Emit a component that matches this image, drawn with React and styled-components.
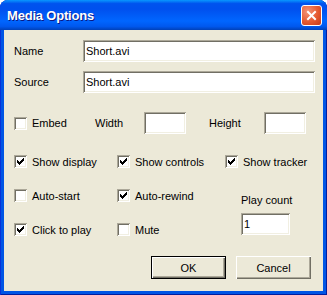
import React from 'react';
import styled, { createGlobalStyle } from 'styled-components';

const Global = createGlobalStyle`
    html, body { margin: 0; padding: 0; background: #fff; }
    body { font-family: "Liberation Sans", Arial, sans-serif; font-size: 11px; color: #000; }
`;

const Window = styled.div`
    width: 327px;
    height: 295px;
    box-sizing: border-box;
    display: flex;
    flex-direction: column;
    background: #0055e5;
    border-radius: 8px 8px 0 0;
    padding: 0 4px 4px 4px;
    box-shadow: inset 1px 0 #0831d9, inset -1px 0 #001ea0, inset 0 -1px #001ea0;
`;

const TitleBar = styled.div`
    height: 30px;
    margin: 0 -4px;
    padding: 0 5px 0 7px;
    display: flex;
    align-items: center;
    justify-content: space-between;
    border-radius: 8px 8px 0 0;
    background: linear-gradient(to bottom, #0997ff 0%, #0053ee 12%, #0050ee 30%, #0066ff 70%, #0058ee 88%, #0041b8 100%);
`;

const Title = styled.span`
    color: #fff;
    font-family: "Liberation Sans", Arial, sans-serif;
    font-weight: bold;
    font-size: 13px;
    letter-spacing: -0.2px;
    text-shadow: 1px 1px #0a1883;
    padding-top: 1px;
`;

const CloseBtn = styled.div`
    width: 21px;
    height: 21px;
    box-sizing: border-box;
    border: 1px solid #fff;
    border-radius: 3px;
    background: radial-gradient(circle at 30% 30%, #f39478 0%, #e55a30 55%, #c4391a 100%);
    display: flex;
    align-items: center;
    justify-content: center;
    margin-top: 1px;
`;

const Body = styled.div`
    flex: 1;
    background: #ece9d8;
    padding: 10px 8px 0 10px;
    display: flex;
    flex-direction: column;
`;

const FieldRow = styled.div`
    display: flex;
    align-items: center;
    height: 22px;
    margin-top: ${p => p.gap || 0}px;
`;

const Label = styled.span`
    width: ${p => p.w ? `${p.w}px` : 'auto'};
    flex-shrink: 0;
    white-space: nowrap;
`;

const TextBox = styled.div`
    box-sizing: border-box;
    height: 22px;
    width: ${p => p.w ? `${p.w}px` : 'auto'};
    flex: ${p => p.w ? '0 0 auto' : '1'};
    background: #fff;
    padding: 4px 3px;
    line-height: 14px;
    box-shadow: inset 1px 1px #aca899, inset -1px -1px #fff, inset 2px 2px #716f64, inset -2px -2px #f1efe2;
`;

const Spacer = styled.div`
    width: ${p => p.w}px;
    flex-shrink: 0;
`;

const Options = styled.div`
    display: grid;
    grid-template-columns: 103px 108px 1fr;
    grid-template-rows: 13px 13px 13px;
    row-gap: 21px;
    margin-top: 21px;
`;

const CheckItem = styled.label`
    display: flex;
    align-items: center;
    gap: 5px;
    height: 13px;
    white-space: nowrap;
`;

const Box = styled.span`
    width: 13px;
    height: 13px;
    flex-shrink: 0;
    background: #fff;
    box-shadow: inset 1px 1px #aca899, inset -1px -1px #fff, inset 2px 2px #716f64, inset -2px -2px #f1efe2;
    display: flex;
    align-items: center;
    justify-content: center;
`;

const PlayCount = styled.div`
    grid-column: 3;
    grid-row: 2 / span 2;
    padding-left: 16px;
    margin-top: 5px;
    display: flex;
    flex-direction: column;
    gap: 7px;
`;

const Buttons = styled.div`
    display: flex;
    justify-content: flex-end;
    gap: 10px;
    margin-top: 20px;
    padding-right: 4px;
`;

const Button = styled.div`
    width: 75px;
    height: 23px;
    box-sizing: border-box;
    display: flex;
    align-items: center;
    justify-content: center;
    background: #ece9d8;
    box-shadow: ${p => p.primary
        ? 'inset 0 0 0 1px #000, inset 2px 2px #fff, inset -2px -2px #716f64, inset -3px -3px #aca899'
        : 'inset 1px 1px #fff, inset -1px -1px #716f64, inset -2px -2px #aca899'};
`;

const Check = ({ on }) => (
    <Box>
        {on && (
            <svg width="7" height="7" viewBox="0 0 7 7" shapeRendering="crispEdges">
                <path d="M6 0h1v3h-1zM5 1h1v3h-1zM4 2h1v3h-1zM3 3h1v3h-1zM2 4h1v3h-1zM1 3h1v3h-1zM0 2h1v3h-1z" fill="#000" />
            </svg>
        )}
    </Box>
);

const Option = ({ on, children }) => (
    <CheckItem>
        <Check on={on} />
        <span>{children}</span>
    </CheckItem>
);

const App = () => (
    <>
        <Global />
        <Window>
            <TitleBar>
                <Title>Media Options</Title>
                <CloseBtn>
                    <svg width="11" height="11" viewBox="0 0 11 11">
                        <path d="M2 2L9 9M9 2L2 9" stroke="#fff" strokeWidth="2" strokeLinecap="square" />
                    </svg>
                </CloseBtn>
            </TitleBar>
            <Body>
                <FieldRow>
                    <Label w={69}>Name</Label>
                    <TextBox>Short.avi</TextBox>
                </FieldRow>
                <FieldRow gap={9}>
                    <Label w={69}>Source</Label>
                    <TextBox>Short.avi</TextBox>
                </FieldRow>
                <FieldRow gap={19}>
                    <Label w={81}><Option>Embed</Option></Label>
                    <Label w={49}>Width</Label>
                    <TextBox w={42} />
                    <Spacer w={23} />
                    <Label w={55}>Height</Label>
                    <TextBox w={42} />
                </FieldRow>
                <Options>
                    <Option on>Show display</Option>
                    <Option on>Show controls</Option>
                    <Option on>Show tracker</Option>
                    <Option>Auto-start</Option>
                    <Option on>Auto-rewind</Option>
                    <PlayCount>
                        <span>Play count</span>
                        <TextBox w={49}>1</TextBox>
                    </PlayCount>
                    <Option on>Click to play</Option>
                    <Option>Mute</Option>
                </Options>
                <Buttons>
                    <Button primary>OK</Button>
                    <Button>Cancel</Button>
                </Buttons>
            </Body>
        </Window>
    </>
);

export default App;
